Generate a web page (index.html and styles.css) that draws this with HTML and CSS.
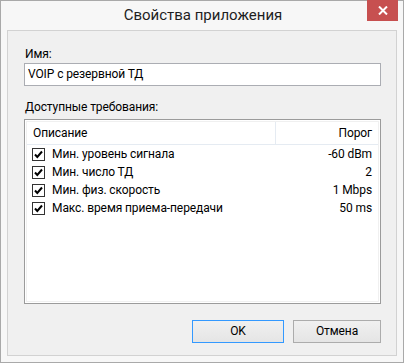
FILE: index.html
```html
<!DOCTYPE html>
<html>
<head>
<meta charset="utf-8">
<link rel="stylesheet" href="styles.css">
</head>
<body>
<div class="window">
  <div class="titlebar">
    <div class="title">Свойства приложения</div>
    <div class="close">
      <svg width="10" height="9" viewBox="0 0 10 9"><path d="M1 0.5 L9 8.5 M9 0.5 L1 8.5" stroke="#fff" stroke-width="2"/></svg>
    </div>
  </div>
  <div class="frame">
    <div class="content">
      <div class="label">Имя:</div>
      <div class="input">VOIP с резервной ТД</div>
      <div class="label label2">Доступные требования:</div>
      <div class="list">
        <div class="list-inner">
          <div class="header">
            <div class="hcol hdesc">Описание</div>
            <div class="hcol hval">Порог</div>
          </div>
          <div class="row"><span class="cb"><svg width="11" height="11" viewBox="0 0 11 11"><path d="M2 5.5 L4.3 8 L9 2.5" stroke="#000" stroke-width="2" fill="none"/></svg></span><span class="name">Мин. уровень сигнала</span><span class="val">-60 dBm</span></div>
          <div class="row"><span class="cb"><svg width="11" height="11" viewBox="0 0 11 11"><path d="M2 5.5 L4.3 8 L9 2.5" stroke="#000" stroke-width="2" fill="none"/></svg></span><span class="name">Мин. число ТД</span><span class="val">2</span></div>
          <div class="row"><span class="cb"><svg width="11" height="11" viewBox="0 0 11 11"><path d="M2 5.5 L4.3 8 L9 2.5" stroke="#000" stroke-width="2" fill="none"/></svg></span><span class="name">Мин. физ. скорость</span><span class="val">1 Mbps</span></div>
          <div class="row"><span class="cb"><svg width="11" height="11" viewBox="0 0 11 11"><path d="M2 5.5 L4.3 8 L9 2.5" stroke="#000" stroke-width="2" fill="none"/></svg></span><span class="name">Макс. время приема-передачи</span><span class="val">50 ms</span></div>
        </div>
      </div>
      <div class="buttons">
        <div class="btn btn-ok">OK</div>
        <div class="btn btn-cancel">Отмена</div>
      </div>
    </div>
  </div>
</div>
</body>
</html>
```

FILE: styles.css
```css
* { box-sizing: border-box; }
html, body { margin: 0; padding: 0; background: #ffffff; }
body { font-family: "Roboto", "Noto Sans", sans-serif; font-size: 12px; color: #000; letter-spacing: -0.1px; }

.window {
  width: 404px;
  height: 363px;
  border: 1px solid #a9a9a9;
  background: #f7f7f7;
  display: flex;
  flex-direction: column;
}
.titlebar {
  height: 29px;
  position: relative;
  display: flex;
  align-items: center;
  justify-content: center;
}
.title {
  font-size: 15px;
  letter-spacing: 0;
  color: #1e1e1e;
  margin-top: -1px;
  padding-left: 2px;
}
.close {
  position: absolute;
  top: -1px;
  right: 5px;
  width: 31px;
  height: 21px;
  background: #c75050;
  display: flex;
  align-items: center;
  justify-content: center;
}
.frame {
  flex: 1;
  padding: 0 6px 6px 6px;
}
.content {
  height: 100%;
  border: 1px solid #d2d2d2;
  background: #f0f0f0;
  padding: 0 15px 0 16px;
  display: flex;
  flex-direction: column;
}
.label {
  height: 16px;
  line-height: 16px;
  margin-top: 15px;
  margin-left: 1px;
}
.label2 { margin-top: 13px; }
.input {
  margin-top: 1px;
  height: 23px;
  border: 1px solid #abadb3;
  background: #fff;
  line-height: 21px;
  padding-left: 3px;
}
.list {
  margin-top: 4px;
  height: 185px;
  border: 1px solid #9b9b9b;
  background: #fff;
  padding: 1px;
}
.list-inner {
  height: 100%;
  border: 1px solid #f0f0f0;
}
.header {
  display: flex;
  height: 23px;
  border-bottom: 1px solid #e5ebf2;
}
.hcol { line-height: 22px; }
.hdesc {
  width: 249px;
  padding-left: 6px;
  border-right: 1px solid #e5ebf2;
}
.hval {
  flex: 1;
  text-align: right;
  padding-right: 6px;
}
.row {
  display: flex;
  align-items: center;
  height: 18px;
}
.row:first-of-type { margin-top: 1px; }
.cb {
  width: 13px;
  height: 13px;
  border: 1px solid #333;
  background: #fff;
  margin-left: 5px;
  display: flex;
  align-items: center;
  justify-content: center;
}
.name { margin-left: 7px; flex: 1; }
.val { padding-right: 6px; text-align: right; }
.buttons {
  margin-top: 16px;
  display: flex;
  justify-content: flex-end;
  gap: 9px;
}
.btn {
  height: 23px;
  line-height: 21px;
  text-align: center;
  background: linear-gradient(#f0f0f0, #e5e5e5);
  border: 1px solid #acacac;
}
.btn-ok { width: 92px; border-color: #3399ff; }
.btn-cancel { width: 88px; }
```
